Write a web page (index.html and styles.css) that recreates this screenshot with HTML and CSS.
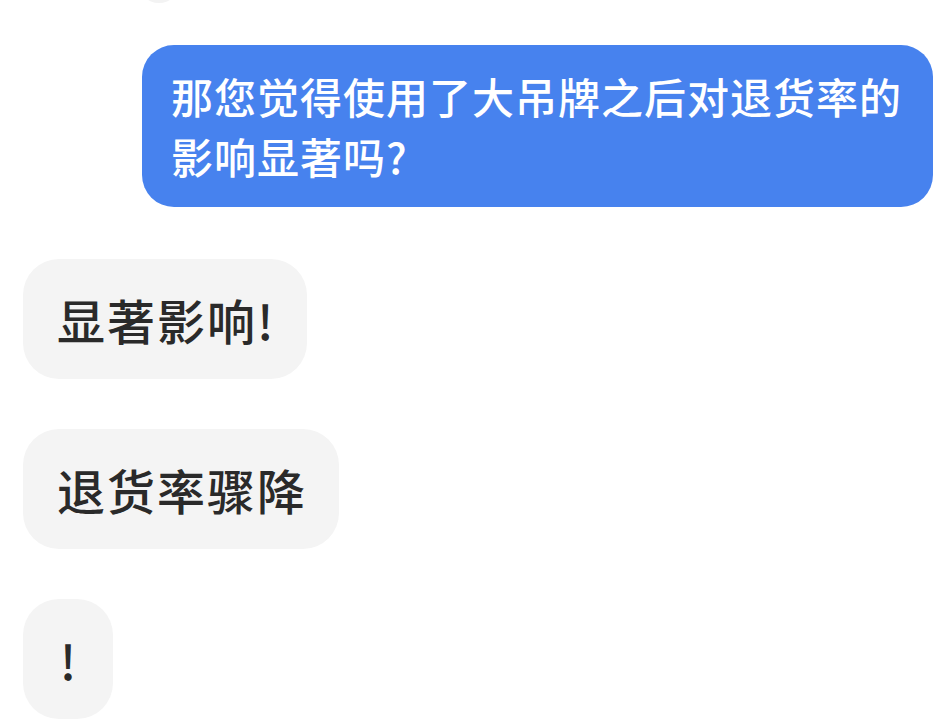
FILE: index.html
```html
<!DOCTYPE html>
<html lang="zh-CN">
<head>
  <meta charset="UTF-8" />
  <meta name="viewport" content="width=device-width, initial-scale=1" />
  <title>聊天记录</title>
  <link rel="stylesheet" href="styles.css">
</head>
<body>

  <div class="chat">
    <div class="prev-edge"></div>

    <div class="bubble me">那您觉得使用了大吊牌之后对退货率的影响显著吗?</div>

    <div class="bubble other">显著影响!</div>
    <div class="bubble other">退货率骤降</div>
    <div class="bubble other narrow">!</div>
  </div>

</body>
</html>
```

FILE: styles.css
```css
/* Reset básico */
* {
  box-sizing: border-box;
}

body {
  margin: 0;
  background: #fff;
  font-family: "Noto Sans CJK SC", "Noto Sans", sans-serif;
  overflow: hidden;
}

.chat {
  display: flex;
  flex-direction: column;
  align-items: flex-start;
  padding: 0 19px 0 23px;
}

/* borda da bolha anterior, cortada no topo */
.prev-edge {
  width: 42px;
  height: 42px;
  margin: -39px 0 0 115px;
  border-radius: 50%;
  background: #f3f3f3;
}

.bubble {
  border-radius: 32px;
  font-weight: 500;
}

.bubble.me {
  align-self: flex-end;
  width: 791px;
  margin-top: 42px;
  padding: 21px 28px 21px 29px;
  background: #4782ee;
  color: #fff;
  font-size: 42px;
  line-height: 60px;
  letter-spacing: 1px;
}

.bubble.other {
  margin-top: 52px;
  min-width: 90px;
  padding: 30px 32px 30px 34px;
  background: #f4f4f4;
  color: #2a2a2a;
  font-size: 48px;
  line-height: 60px;
  letter-spacing: 2px;
  text-align: center;
  border-radius: 36px;
}

.bubble.other + .bubble.other {
  margin-top: 50px;
}
```
